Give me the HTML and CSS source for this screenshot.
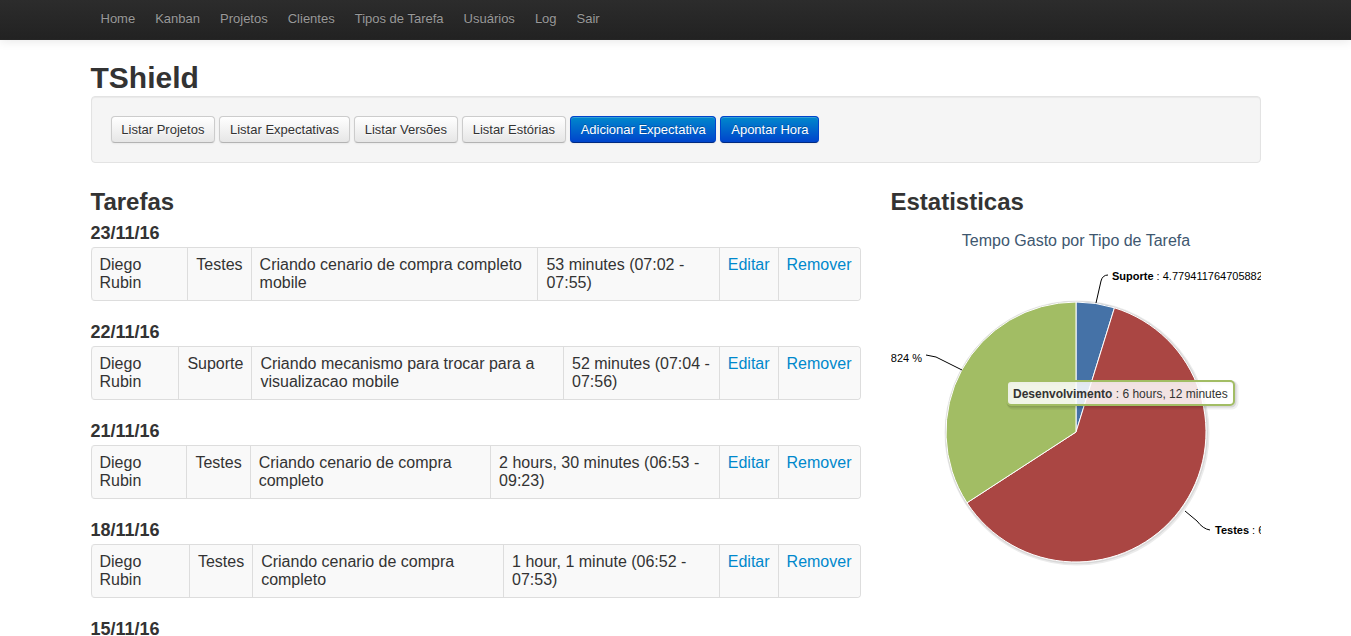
FILE: index.html
```html
<!DOCTYPE html>
<html lang="pt">
<head>
<meta charset="utf-8">
<title>TShield</title>
<link rel="stylesheet" href="styles.css">
</head>
<body>
<div class="navbar">
  <div class="container">
    <ul class="nav">
      <li><a href="#">Home</a></li>
      <li><a href="#">Kanban</a></li>
      <li><a href="#">Projetos</a></li>
      <li><a href="#">Clientes</a></li>
      <li><a href="#">Tipos de Tarefa</a></li>
      <li><a href="#">Usuários</a></li>
      <li><a href="#">Log</a></li>
      <li><a href="#">Sair</a></li>
    </ul>
  </div>
</div>

<div class="container">
  <h1 class="brand-title">TShield</h1>
  <div class="well">
    <a class="btn" href="#">Listar Projetos</a>
    <a class="btn" href="#">Listar Expectativas</a>
    <a class="btn" href="#">Listar Versões</a>
    <a class="btn" href="#">Listar Estórias</a>
    <a class="btn btn-primary" href="#">Adicionar Expectativa</a>
    <a class="btn btn-primary" href="#">Apontar Hora</a>
  </div>

  <div class="row">
    <div class="col-main">
      <h3>Tarefas</h3>

      <h4>23/11/16</h4>
      <table class="table">
        <tr>
          <td>Diego Rubin</td><td>Testes</td><td>Criando cenario de compra completo mobile</td>
          <td>53 minutes (07:02 - 07:55)</td><td><a href="#">Editar</a></td><td><a href="#">Remover</a></td>
        </tr>
      </table>

      <h4>22/11/16</h4>
      <table class="table">
        <tr>
          <td>Diego Rubin</td><td>Suporte</td><td>Criando mecanismo para trocar para a visualizacao mobile</td>
          <td>52 minutes (07:04 - 07:56)</td><td><a href="#">Editar</a></td><td><a href="#">Remover</a></td>
        </tr>
      </table>

      <h4>21/11/16</h4>
      <table class="table">
        <tr>
          <td>Diego Rubin</td><td>Testes</td><td>Criando cenario de compra completo</td>
          <td>2 hours, 30 minutes (06:53 - 09:23)</td><td><a href="#">Editar</a></td><td><a href="#">Remover</a></td>
        </tr>
      </table>

      <h4>18/11/16</h4>
      <table class="table">
        <tr>
          <td>Diego Rubin</td><td>Testes</td><td>Criando cenario de compra completo</td>
          <td>1 hour, 1 minute (06:52 - 07:53)</td><td><a href="#">Editar</a></td><td><a href="#">Remover</a></td>
        </tr>
      </table>

      <h4>15/11/16</h4>
      <table class="table">
        <tr>
          <td>Diego Rubin</td><td>Testes</td><td>Criando cenario de compra completo</td>
          <td>1 hour (06:50 - 07:50)</td><td><a href="#">Editar</a></td><td><a href="#">Remover</a></td>
        </tr>
      </table>
    </div>

    <div class="col-side">
      <h3>Estatisticas</h3>
      <svg class="chart" width="370" height="410" viewBox="0 0 370 410">
        <text class="chart-title" x="185" y="23" text-anchor="middle">Tempo Gasto por Tipo de Tarefa</text>
        <circle cx="186" cy="210" r="131" fill="none" stroke="rgba(0,0,0,0.08)" stroke-width="3"/>
        <circle cx="185.5" cy="209.5" r="130.5" fill="none" stroke="rgba(0,0,0,0.08)" stroke-width="2"/>
        <path d="M185 209 L185 79 A130 130 0 0 1 223.44 84.81 Z" fill="#4572A7" stroke="#fff" stroke-width="1"/>
        <path d="M185 209 L223.44 84.81 A130 130 0 1 1 75.97 279.8 Z" fill="#AA4643" stroke="#fff" stroke-width="1"/>
        <path d="M185 209 L75.97 279.8 A130 130 0 0 1 185 79 Z" fill="#A2BD64" stroke="#fff" stroke-width="1"/>

        <path d="M205 80 L210 58 Q211.5 52 217 52" fill="none" stroke="#000" stroke-width="1"/>
        <text class="dl" x="221" y="57"><tspan font-weight="bold">Suporte</tspan> : 4.779411764705882 %</text>

        <path d="M35 132 L45 134 L71 147" fill="none" stroke="#000" stroke-width="1"/>
        <text class="dl" x="31" y="139" text-anchor="end"><tspan font-weight="bold">Desenvolvimento</tspan> : 34.19117647058824 %</text>

        <path d="M294 288 L306 298 Q312 306 319 307" fill="none" stroke="#000" stroke-width="1"/>
        <text class="dl" x="324" y="311"><tspan font-weight="bold">Testes</tspan> : 61.02941176470588 %</text>

        <rect x="118" y="160" width="227" height="24" rx="4" fill="none" stroke="rgba(0,0,0,0.06)" stroke-width="5"/>
        <rect x="117" y="159" width="227" height="24" rx="4" fill="none" stroke="rgba(0,0,0,0.1)" stroke-width="3"/>
        <rect x="116" y="158" width="227" height="24" rx="4" fill="rgba(255,255,255,0.85)" stroke="#A2BD64" stroke-width="2"/>
        <text class="tip" x="122" y="175"><tspan font-weight="bold">Desenvolvimento</tspan> : 6 hours, 12 minutes</text>
      </svg>
    </div>
  </div>
</div>
</body>
</html>
```

FILE: styles.css
```css
html, body {
  margin: 0;
  padding: 0;
}
body {
  font-family: "Liberation Sans", Arial, Helvetica, sans-serif;
  font-size: 14px;
  line-height: 20px;
  color: #333;
  background: #fff;
}
a {
  color: #0088cc;
  text-decoration: none;
}
.container {
  width: 1170px;
  margin: 0 auto;
}

/* navbar */
.navbar {
  height: 40px;
  background-color: #1b1b1b;
  background-image: linear-gradient(to bottom, #2c2c2c, #222222);
  border-bottom: 1px solid #252525;
  box-sizing: border-box;
  box-shadow: 0 1px 10px rgba(0, 0, 0, 0.1);
}
.nav {
  list-style: none;
  margin: 0;
  padding: 0;
  display: flex;
}
.nav a {
  display: block;
  padding: 9px 10px 11px;
  font-size: 13px;
  line-height: 20px;
  color: #999;
  text-shadow: 0 -1px 0 rgba(0, 0, 0, 0.25);
}

/* header */
.brand-title {
  margin: 20px 0 0;
  font-size: 30px;
  line-height: 36px;
  font-weight: bold;
  color: #333;
}
.well {
  background: #f5f5f5;
  border: 1px solid #e3e3e3;
  border-radius: 4px;
  box-shadow: inset 0 1px 1px rgba(0, 0, 0, 0.05);
  padding: 19px;
  display: flex;
  gap: 4px;
  align-items: flex-start;
}
.btn {
  display: inline-block;
  padding: 5px 9.8px;
  font-size: 13px;
  line-height: 15px;
  color: #333;
  text-shadow: 0 1px 1px rgba(255, 255, 255, 0.75);
  background-color: #f5f5f5;
  background-image: linear-gradient(to bottom, #ffffff, #e6e6e6);
  border: 1px solid #cccccc;
  border-bottom-color: #b3b3b3;
  border-radius: 4px;
  box-shadow: inset 0 1px 0 rgba(255, 255, 255, 0.2), 0 1px 2px rgba(0, 0, 0, 0.05);
}
.btn-primary {
  color: #fff;
  text-shadow: 0 -1px 0 rgba(0, 0, 0, 0.25);
  background-color: #006dcc;
  background-image: linear-gradient(to bottom, #0088cc, #0044cc);
  border-color: #0044cc #0044cc #002a80;
}

/* columns */
.row {
  display: flex;
  gap: 30px;
}
.col-main {
  width: 770px;
}
.col-side {
  width: 370px;
}
h3 {
  margin: 26px 0 8px;
  font-size: 24px;
  line-height: 26px;
  font-weight: bold;
  color: #333;
}
h4 {
  margin: 0 0 4px;
  font-size: 18px;
  line-height: 20px;
  font-weight: bold;
  color: #333;
}

/* tables */
.table {
  width: 100%;
  border-collapse: separate;
  border-spacing: 0;
  border: 1px solid #dddddd;
  border-left: 0;
  border-radius: 4px;
  margin-bottom: 21px;
  font-size: 16px;
  line-height: 18px;
}
.table td {
  padding: 8px;
  border-left: 1px solid #dddddd;
  background: #f9f9f9;
  vertical-align: top;
  text-align: left;
}
.table td:first-child {
  border-radius: 4px 0 0 4px;
}
.table td:last-child {
  border-radius: 0 4px 4px 0;
}

/* chart */
.chart {
  display: block;
  overflow: hidden;
}
.chart-title {
  font-family: "Liberation Sans", Arial, sans-serif;
  font-size: 16px;
  fill: #3e576f;
}
.dl {
  font-family: "Liberation Sans", Arial, sans-serif;
  font-size: 11px;
  fill: #000;
}
.tip {
  font-family: "Liberation Sans", Arial, sans-serif;
  font-size: 12px;
  fill: #333;
}
```
